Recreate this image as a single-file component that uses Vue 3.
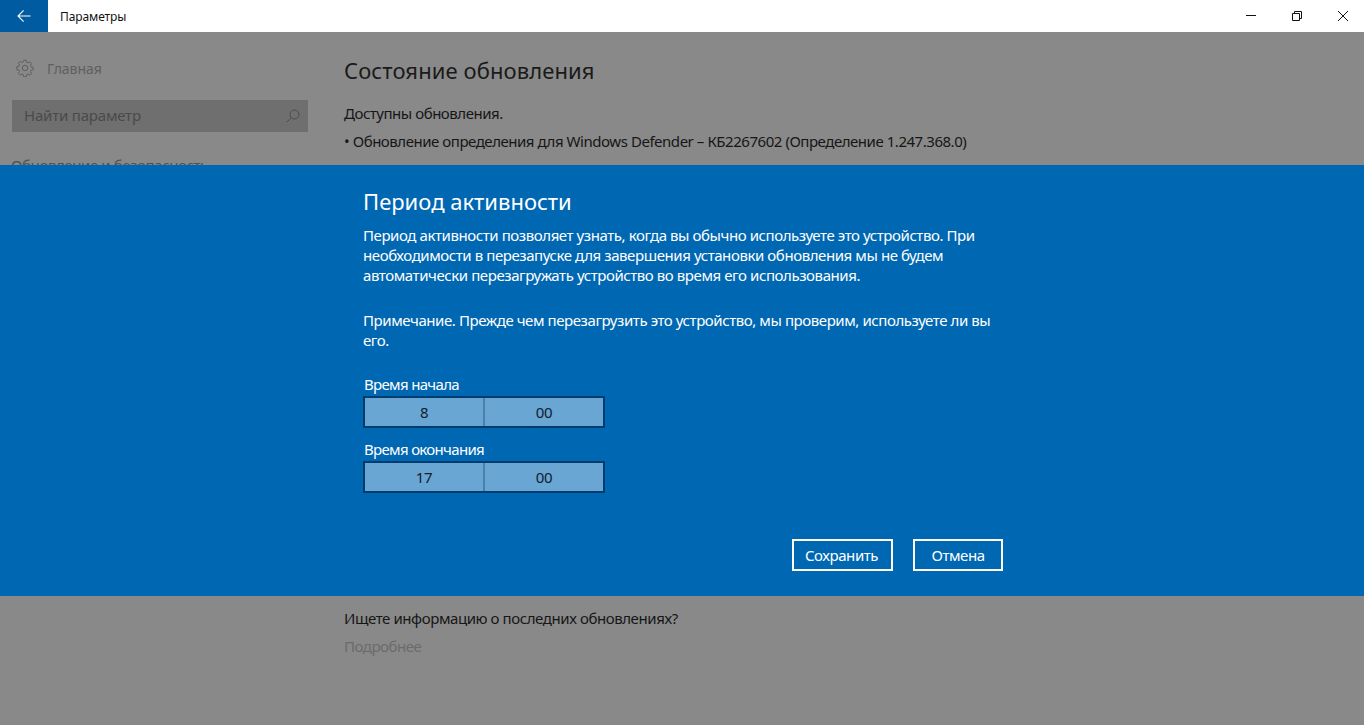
<script setup>
const pickers = [
  { label: 'Время начала', hour: '8', minute: '00' },
  { label: 'Время окончания', hour: '17', minute: '00' }
]
</script>

<template>
  <div class="window">
    <header class="titlebar">
      <button class="back" aria-label="Назад">
        <svg width="16" height="16" viewBox="0 0 16 16" fill="none" stroke="#fff" stroke-width="1.1">
          <path d="M2 8h12.5M7.6 2.4 2 8l5.6 5.6" />
        </svg>
      </button>
      <span class="app-title">Параметры</span>
      <div class="controls">
        <span class="ctl">
          <svg width="12" height="12" viewBox="0 0 12 12" fill="none" stroke="#111" stroke-width="1"><path d="M1 5.5h10" /></svg>
        </span>
        <span class="ctl">
          <svg width="12" height="12" viewBox="0 0 12 12" fill="none" stroke="#111" stroke-width="1"><path d="M1.5 3.5h7v7h-7zM3.5 3.5v-2h7v7h-2" /></svg>
        </span>
        <span class="ctl">
          <svg width="12" height="12" viewBox="0 0 12 12" fill="none" stroke="#111" stroke-width="1"><path d="M1 1l10 10M11 1 1 11" /></svg>
        </span>
      </div>
    </header>

    <div class="body">
      <aside class="sidebar">
        <div class="home">
          <svg width="18" height="18" viewBox="0 0 18 18" fill="none" stroke="#5f5f5f" stroke-width="1">
            <circle cx="9" cy="9" r="2.7" />
            <path d="M7.7 1.3h2.6l.4 2.1 1.4.6 1.8-1.2 1.8 1.8-1.2 1.8.6 1.4 2.1.4v2.6l-2.1.4-.6 1.4 1.2 1.8-1.8 1.8-1.8-1.2-1.4.6-.4 2.1H7.7l-.4-2.1-1.4-.6-1.8 1.2-1.8-1.8 1.2-1.8-.6-1.4-2.1-.4V7.7l2.1-.4.6-1.4-1.2-1.8 1.8-1.8 1.8 1.2 1.4-.6z" />
          </svg>
          <span>Главная</span>
        </div>
        <div class="search">
          <span class="search-text">Найти параметр</span>
          <svg width="14" height="14" viewBox="0 0 14 14" fill="none" stroke="#4c4c4c" stroke-width="1">
            <circle cx="8.5" cy="5.5" r="4.5" />
            <path d="M5.2 8.8 .8 13.2" />
          </svg>
        </div>
        <div class="section">Обновление и безопасность</div>
      </aside>

      <main class="content">
        <h1>Состояние обновления</h1>
        <p class="p1">Доступны обновления.</p>
        <p class="p2">• Обновление определения для Windows Defender – КБ2267602 (Определение 1.247.368.0)</p>
        <div class="spacer"></div>
        <p class="p3">Ищете информацию о последних обновлениях?</p>
        <p class="more">Подробнее</p>
      </main>
    </div>

    <section class="dialog">
      <div class="dialog-inner">
        <h2>Период активности</h2>
        <p class="text">Период активности позволяет узнать, когда вы обычно используете это устройство. При необходимости в перезапуске для завершения установки обновления мы не будем автоматически перезагружать устройство во время его использования.</p>
        <p class="text note">Примечание. Прежде чем перезагрузить это устройство, мы проверим, используете ли вы его.</p>
        <div class="pickers">
          <div v-for="p in pickers" :key="p.label" class="picker">
            <div class="picker-label">{{ p.label }}</div>
            <div class="picker-box">
              <span class="cell">{{ p.hour }}</span>
              <span class="cell">{{ p.minute }}</span>
            </div>
          </div>
        </div>
        <div class="actions">
          <button class="btn save">Сохранить</button>
          <button class="btn cancel">Отмена</button>
        </div>
      </div>
    </section>
  </div>
</template>

<style>
html, body { margin: 0; padding: 0; overflow: hidden; }
</style>

<style scoped>
.window {
  position: relative;
  width: 1364px;
  height: 725px;
  background: #898989;
  font-family: "Noto Sans", "Open Sans", sans-serif;
  overflow: hidden;
}
.titlebar {
  display: flex;
  align-items: center;
  height: 32px;
  background: #fff;
}
.back {
  width: 48px;
  height: 32px;
  display: flex;
  align-items: center;
  justify-content: center;
  padding: 0;
  border: 0;
  background: #005ba1;
}
.app-title {
  margin-left: 12px;
  font-size: 12px;
  letter-spacing: -0.1px;
  color: #111;
}
.controls { display: flex; margin-left: auto; margin-right: -2px; }
.ctl {
  width: 46px;
  height: 32px;
  display: flex;
  align-items: center;
  justify-content: center;
}
.body { display: flex; height: 693px; }
.sidebar { width: 344px; flex: none; padding: 0 12px; box-sizing: border-box; }
.home {
  display: flex;
  align-items: center;
  gap: 13px;
  height: 20px;
  margin: 26px 0 0 4px;
  font-size: 14px;
  letter-spacing: -0.05px;
  color: #5f5f5f;
}
.search {
  display: flex;
  align-items: center;
  justify-content: space-between;
  width: 296px;
  height: 32px;
  margin-top: 22px;
  padding: 0 8px 0 12px;
  box-sizing: border-box;
  background: #6f6f6f;
  font-size: 15px;
  letter-spacing: -0.2px;
  color: #4a4a4a;
}
.search-text { padding-bottom: 2px; }
.section {
  margin: 23px 0 0 -1px;
  font-size: 15px;
  letter-spacing: -0.4px;
  color: #4f4f4f;
  white-space: nowrap;
}
.content { flex: 1; color: #161616; }
h1 {
  margin: 23px 0 0;
  font-size: 22px;
  line-height: 30px;
  font-weight: 400;
  letter-spacing: 0.1px;
  color: #1a1a1a;
}
.content p {
  margin: 0;
  font-size: 15px;
  line-height: 20px;
  letter-spacing: -0.47px;
  white-space: nowrap;
}
.content .p2 { padding-top: 8px; word-spacing: 0.1px; }
.content .p3 { letter-spacing: -0.42px; }
.p1 { padding-top: 18px; }
.spacer { height: 457px; }
.content .more { padding-top: 8px; color: #6b6b6b; }
.dialog {
  position: absolute;
  left: 0;
  right: 0;
  top: 165px;
  height: 431px;
  background: #0067b3;
  color: #fff;
}
.dialog-inner {
  width: 640px;
  height: 100%;
  margin-left: 363px;
  position: relative;
}
h2 {
  margin: 0;
  padding-top: 21px;
  font-size: 22px;
  line-height: 30px;
  font-weight: 400;
  letter-spacing: 0;
}
.text {
  margin: 9px 0 0;
  font-size: 15px;
  line-height: 20px;
  letter-spacing: -0.42px;
}
.note { margin-top: 25px; }
.pickers { margin-top: 24px; }
.picker + .picker { margin-top: 11px; }
.picker-label {
  font-size: 15px;
  line-height: 20px;
  letter-spacing: -0.68px;
  padding-left: 1px;
  margin-bottom: 2px;
}
.picker-box {
  display: flex;
  width: 242px;
  height: 32px;
  box-sizing: border-box;
  border: 2px solid #003d6e;
  background: #69a6d3;
  color: #10202e;
}
.cell {
  flex: 1;
  display: flex;
  align-items: center;
  justify-content: center;
  font-size: 15px;
  letter-spacing: -0.4px;
}
.cell + .cell { border-left: 2px solid #4a81ac; }
.actions {
  position: absolute;
  right: 0;
  top: 374px;
  display: flex;
  gap: 20px;
}
.btn {
  height: 32px;
  box-sizing: border-box;
  border: 2px solid #fff;
  background: transparent;
  color: #fff;
  font: inherit;
  font-size: 15px;
  letter-spacing: -0.42px;
  padding: 0;
}
.save { width: 101px; padding-right: 2px; }
.cancel { width: 90px; }
</style>
